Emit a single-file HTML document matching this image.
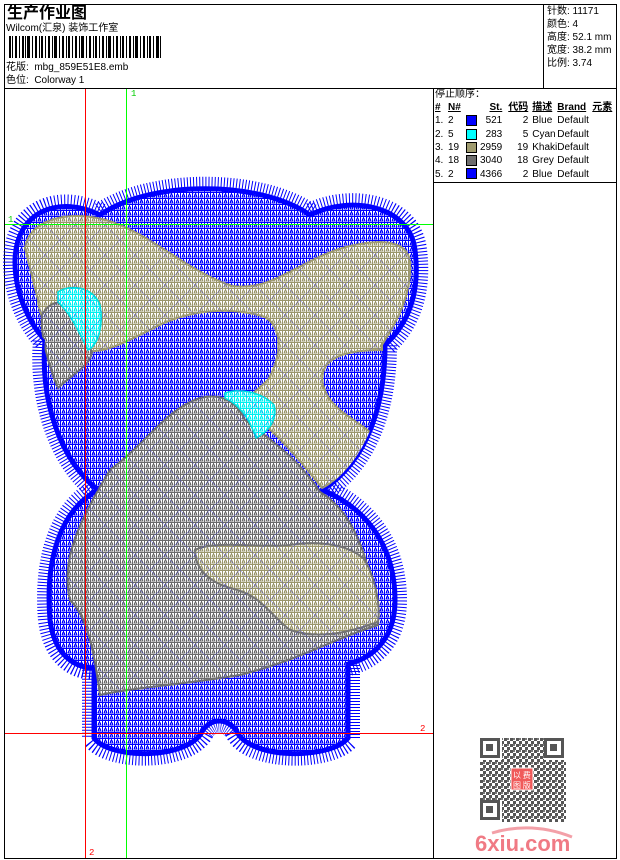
<!DOCTYPE html>
<html><head><meta charset="utf-8"><style>
*{margin:0;padding:0;box-sizing:border-box}
body{width:620px;height:860px;background:#fff;position:relative;overflow:hidden;font-family:"Liberation Sans","Noto Sans CJK SC",sans-serif;font-size:10px;color:#000}
.a{position:absolute;white-space:nowrap;line-height:12px}
.ln{position:absolute;background:#000}
.p td{padding:0;height:13.3px;line-height:13px;font-size:10px;white-space:nowrap}
.sw{display:inline-block;width:11px;height:11px;border:1px solid #000;vertical-align:middle}
</style></head><body>
<div class="ln" style="left:4px;top:4px;width:613px;height:1px"></div>
<div class="ln" style="left:4px;top:4px;width:1px;height:855px"></div>
<div class="ln" style="left:616px;top:4px;width:1px;height:855px"></div>
<div class="ln" style="left:4px;top:858px;width:613px;height:1px"></div>
<div class="ln" style="left:4px;top:88px;width:613px;height:1px"></div>
<div class="ln" style="left:543px;top:4px;width:1px;height:84px"></div>
<div class="ln" style="left:433px;top:88px;width:1px;height:771px"></div>
<div class="ln" style="left:433px;top:182px;width:184px;height:1px"></div>

<div class="a" style="left:7px;top:5px;font-size:16px;font-weight:bold;line-height:18px">生产作业图</div>
<div class="a" style="left:6px;top:23px">Wilcom(汇泉) 装饰工作室</div>
<svg class="a" style="left:9px;top:36px" width="152" height="22">
<g fill="#000">
<rect x="0" width="2" height="22"/><rect x="3" width="1" height="22"/><rect x="6" width="2" height="22"/><rect x="10" width="1" height="22"/><rect x="13" width="2" height="22"/><rect x="16" width="1" height="22"/><rect x="18" width="3" height="22"/><rect x="23" width="1" height="22"/><rect x="26" width="2" height="22"/><rect x="30" width="1" height="22"/><rect x="32" width="2" height="22"/><rect x="36" width="1" height="22"/><rect x="39" width="2" height="22"/><rect x="43" width="1" height="22"/><rect x="45" width="3" height="22"/><rect x="50" width="1" height="22"/><rect x="53" width="2" height="22"/><rect x="57" width="1" height="22"/><rect x="59" width="2" height="22"/><rect x="63" width="1" height="22"/><rect x="66" width="2" height="22"/><rect x="70" width="1" height="22"/><rect x="72" width="3" height="22"/><rect x="77" width="1" height="22"/><rect x="80" width="2" height="22"/><rect x="84" width="1" height="22"/><rect x="86" width="2" height="22"/><rect x="90" width="1" height="22"/><rect x="93" width="2" height="22"/><rect x="97" width="1" height="22"/><rect x="99" width="3" height="22"/><rect x="104" width="1" height="22"/><rect x="107" width="2" height="22"/><rect x="111" width="1" height="22"/><rect x="113" width="2" height="22"/><rect x="117" width="1" height="22"/><rect x="120" width="2" height="22"/><rect x="124" width="1" height="22"/><rect x="126" width="3" height="22"/><rect x="131" width="1" height="22"/><rect x="134" width="2" height="22"/><rect x="138" width="1" height="22"/><rect x="140" width="2" height="22"/><rect x="144" width="1" height="22"/><rect x="147" width="3" height="22"/><rect x="151" width="1" height="22"/>
</g></svg>
<div class="a" style="left:6px;top:62px">花版:&nbsp; mbg_859E51E8.emb</div>
<div class="a" style="left:6px;top:75px">色位:&nbsp; Colorway 1</div>

<div class="a" style="left:547px;top:6px">针数: 11171</div>
<div class="a" style="left:547px;top:19px">颜色: 4</div>
<div class="a" style="left:547px;top:32px">高度: 52.1 mm</div>
<div class="a" style="left:547px;top:45px">宽度: 38.2 mm</div>
<div class="a" style="left:547px;top:58px">比例: 3.74</div>

<div class="a" style="left:435px;top:89px">停止顺序：</div>
<table class="p a" style="left:435px;top:101px;border-collapse:collapse">
<tr style="font-weight:bold;text-decoration:underline"><td style="width:13px">#</td><td style="width:18px">N#</td><td style="width:14px"></td><td style="width:20px;text-align:right">St.</td><td style="width:26px;text-align:right">代码</td><td style="width:29px;padding-left:4px">描述</td><td style="width:35px">Brand</td><td>元素</td></tr>
<tr><td>1.</td><td>2</td><td><span class="sw" style="background:#0000ff"></span></td><td style="text-align:right">521</td><td style="text-align:right">2</td><td style="padding-left:4px">Blue</td><td>Default</td><td></td></tr>
<tr><td>2.</td><td>5</td><td><span class="sw" style="background:#00ffff"></span></td><td style="text-align:right">283</td><td style="text-align:right">5</td><td style="padding-left:4px">Cyan</td><td>Default</td><td></td></tr>
<tr><td>3.</td><td>19</td><td><span class="sw" style="background:#a09c70"></span></td><td style="text-align:right">2959</td><td style="text-align:right">19</td><td style="padding-left:4px">Khaki</td><td>Default</td><td></td></tr>
<tr><td>4.</td><td>18</td><td><span class="sw" style="background:#6e6e6e"></span></td><td style="text-align:right">3040</td><td style="text-align:right">18</td><td style="padding-left:4px">Grey</td><td>Default</td><td></td></tr>
<tr><td>5.</td><td>2</td><td><span class="sw" style="background:#0000ff"></span></td><td style="text-align:right">4366</td><td style="text-align:right">2</td><td style="padding-left:4px">Blue</td><td>Default</td><td></td></tr>
</table>

<svg class="a" style="left:0;top:0" width="433" height="858" shape-rendering="crispEdges">
<defs>
<pattern id="pb" width="6" height="6" patternUnits="userSpaceOnUse"><rect width="6" height="6" fill="#fff"/><path d="M0 0.5H6M0.5 0V6M2 5L3.5 1.5L5 5Z" stroke="#0000ff" stroke-width="1" fill="none"/></pattern>
<pattern id="pk" width="6" height="6" patternUnits="userSpaceOnUse"><rect width="6" height="6" fill="#fff"/><path d="M0 0.5H6M0.5 0V6M2 5L3.5 1.5L5 5Z" stroke="#9a966a" stroke-width="1" fill="none"/></pattern>
<pattern id="pg" width="6" height="6" patternUnits="userSpaceOnUse"><rect width="6" height="6" fill="#fff"/><path d="M0 0.5H6M0.5 0V6M2 5L3.5 1.5L5 5Z" stroke="#6a6a6a" stroke-width="1" fill="none"/></pattern>
<pattern id="pc" width="6" height="6" patternUnits="userSpaceOnUse"><rect width="6" height="6" fill="#fff"/><path d="M0 0.5H6M0.5 0V6M2 5L3.5 1.5L5 5Z" stroke="#00f0f0" stroke-width="1" fill="none"/></pattern>
<pattern id="pd" width="30" height="30" patternUnits="userSpaceOnUse"><path d="M0 0L30 30M30 0L0 30" stroke="#2020ff" stroke-width="0.6"/></pattern>
<clipPath id="cl"><path id="outer" d="M100,215 C60,195 15,210 15,262 C15,300 35,330 45,340 C40,400 60,460 98,490 C60,510 45,560 50,620 C55,660 80,668 94,668 L94,738 C110,760 190,760 203,730 C212,718 226,718 236,730 C248,760 330,760 348,738 L348,664 C372,658 395,640 395,600 C395,540 360,505 322,490 C370,460 385,400 385,345 C410,322 420,290 415,250 C410,205 350,195 310,215 C260,180 150,180 100,215 Z"/></clipPath>
</defs>
<use href="#outer" fill="none" stroke="#0000ff" stroke-width="24" stroke-dasharray="1 2" shape-rendering="auto"/>
<use href="#outer" fill="url(#pb)" stroke="#0000ff" stroke-width="5" shape-rendering="auto"/>
<g clip-path="url(#cl)">
<path d="M25,248 C30,215 80,208 120,225 C160,242 190,272 232,286 C275,292 300,258 350,246 C385,238 408,242 410,262 C412,300 392,328 382,345 L382,350 C340,350 318,360 323,385 C330,412 360,420 376,438 C360,468 340,478 322,488 C300,460 275,430 240,405 L268,380 C285,350 280,322 262,316 C222,305 182,312 150,330 C120,345 100,355 80,350 C55,345 40,322 38,300 Z" fill="url(#pk)" stroke="#a09c70" stroke-width="2" shape-rendering="auto"/>
<path d="M42,315 C50,300 65,298 72,312 L92,352 C90,366 75,372 58,388 C50,370 40,335 42,315 Z" fill="url(#pg)" stroke="#707070" stroke-width="2" shape-rendering="auto"/>
<path d="M110,470 C150,440 165,410 200,398 C225,392 238,405 245,420 C270,440 295,455 320,492 C350,510 370,550 378,625 C330,640 300,660 240,675 C180,685 130,688 100,695 C95,660 90,620 70,600 C60,560 80,520 110,470 Z" fill="url(#pg)" stroke="#707070" stroke-width="2" shape-rendering="auto"/>
<path d="M195,550 C215,540 260,548 290,545 C320,540 350,545 365,560 C378,585 380,610 378,622 C350,632 320,640 290,630 C270,615 262,595 230,588 C210,582 195,570 195,550 Z" fill="url(#pk)" stroke="#747474" stroke-width="2" shape-rendering="auto"/>
<path d="M58,292 C70,284 92,286 100,305 C104,325 98,345 88,350 C80,335 72,315 58,302 Z" fill="url(#pc)" stroke="#00e0e0" stroke-width="1.5" shape-rendering="auto"/>
<path d="M225,393 C240,388 262,392 274,405 C278,420 268,432 256,438 C250,420 240,405 225,398 Z" fill="url(#pc)" stroke="#00e0e0" stroke-width="1.5" shape-rendering="auto"/>
<rect width="433" height="858" fill="url(#pd)" shape-rendering="auto"/>
</g>
<text x="131" y="96" fill="#00cc00" font-size="9" font-family="Liberation Mono,monospace">1</text>
<text x="8" y="222" fill="#00cc00" font-size="9" font-family="Liberation Mono,monospace">1</text>
<text x="420" y="731" fill="#ff0000" font-size="9" font-family="Liberation Mono,monospace">2</text>
<text x="89" y="855" fill="#ff0000" font-size="9" font-family="Liberation Mono,monospace">2</text>
</svg>
<div class="ln" style="left:5px;top:224px;width:428px;height:1px;background:#00ff00"></div>
<div class="ln" style="left:126px;top:89px;width:1px;height:769px;background:#00ff00"></div>
<div class="ln" style="left:85px;top:89px;width:1px;height:769px;background:#ff0000"></div>
<div class="ln" style="left:5px;top:733px;width:428px;height:1px;background:#ff0000"></div>

<svg class="a" style="left:480px;top:738px" width="86" height="84">
<defs><pattern id="qr" width="6" height="6" patternUnits="userSpaceOnUse"><rect width="3" height="3" fill="#555"/><rect x="3" y="3" width="3" height="3" fill="#555"/><rect x="3" width="2" height="2" fill="#777"/></pattern></defs>
<rect width="86" height="84" fill="url(#qr)"/>
<g fill="#fff"><rect x="0" y="0" width="22" height="22"/><rect x="64" y="0" width="22" height="22"/><rect x="0" y="62" width="22" height="22"/></g>
<g fill="none" stroke="#555" stroke-width="3"><rect x="1.5" y="1.5" width="17" height="17"/><rect x="65.5" y="1.5" width="17" height="17"/><rect x="1.5" y="63.5" width="17" height="17"/></g>
<g fill="#555"><rect x="6" y="6" width="7" height="7"/><rect x="70" y="6" width="7" height="7"/><rect x="6" y="68" width="7" height="7"/></g>
<rect x="31" y="30" width="22" height="22" fill="#f05a5a" stroke="#fff" stroke-width="1"/>
<text x="33" y="40" font-size="8" fill="#fff" font-family="Noto Sans CJK SC,sans-serif">以 费</text>
<text x="33" y="50" font-size="8" fill="#fff" font-family="Noto Sans CJK SC,sans-serif">图 版</text>
</svg>
<svg class="a" style="left:472px;top:823px" width="105" height="32">
<path d="M20,10 Q60,-2 100,14" stroke="#f3a0a8" stroke-width="3" fill="none"/>
<text x="3" y="28" font-size="22" font-weight="bold" fill="#f07a84" font-family="Liberation Sans,sans-serif">6xiu.com</text>
</svg>
</body></html>
